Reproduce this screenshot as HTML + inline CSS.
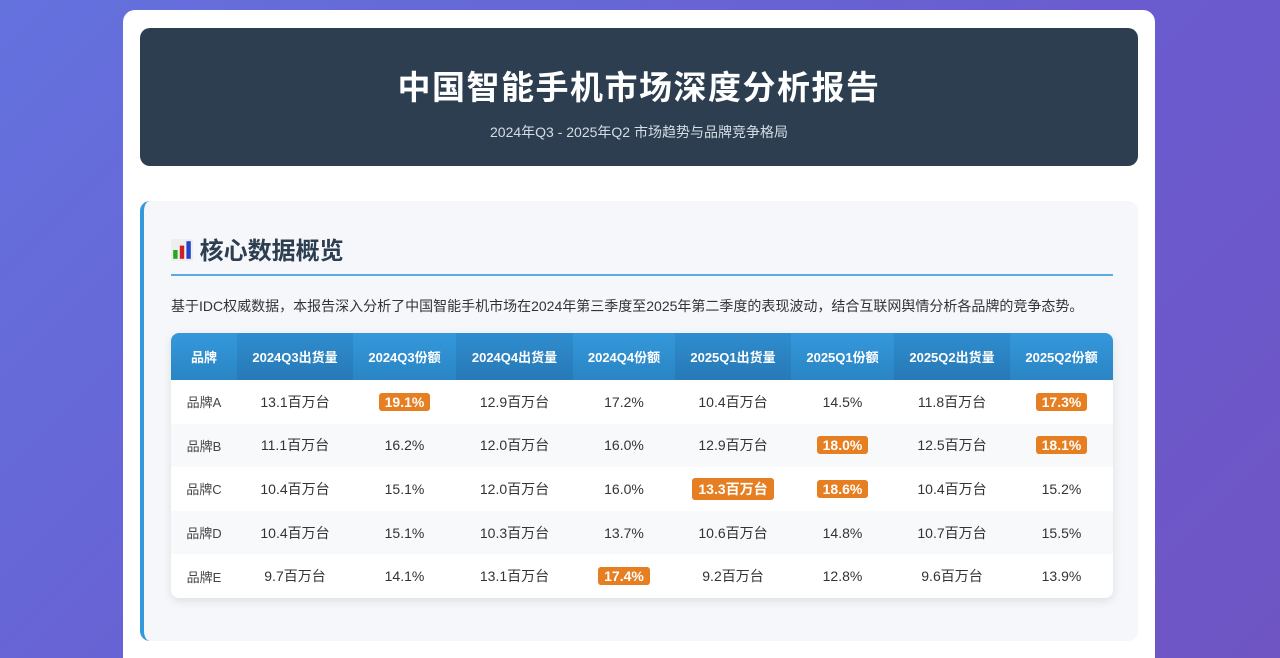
<!DOCTYPE html>
<html><head><meta charset="utf-8"><style>
*{margin:0;padding:0;box-sizing:border-box}
html,body{width:1280px;height:658px;overflow:hidden}
body{background:linear-gradient(135deg,#6472de,#6a5bcf 60%,#6f55c4);font-family:"Liberation Sans","Noto Sans CJK SC",sans-serif;position:relative}
.wrap{position:absolute;left:123px;top:10px;width:1032px;height:660px;background:#fff;border-radius:12px}
.hd{position:absolute;left:17px;top:18px;width:998px;height:138px;background:#2c3e50;border-radius:10px;color:#fff;text-align:center}
.hd h1{font-size:33px;font-weight:bold;margin-top:33px;letter-spacing:1.5px}
.hd p{font-size:14px;color:#d5dde5;margin-top:13px}
.sec{position:absolute;left:17px;top:191px;width:998px;height:440px;background:#f5f7fa;border-left:4px solid #3498db;border-radius:10px}
.sec h2{position:absolute;left:27px;top:30px;font-size:24px;color:#2c3e50;font-weight:bold}
.line{position:absolute;left:27px;top:73px;width:942px;height:2px;background:#3498db;opacity:.8}
.desc{position:absolute;left:27px;top:95px;font-size:14px;color:#333;white-space:nowrap}
table{position:absolute;left:27px;top:132px;width:942px;border-collapse:collapse;border-radius:8px;overflow:hidden;box-shadow:0 3px 10px rgba(0,0,0,.1);font-size:14px}
th{background:linear-gradient(#3498db,#2a85c4);color:#fff;height:47px;font-weight:bold;font-size:13px}
th:nth-child(even){background:linear-gradient(#2f8dcf,#2779b6)}
td{height:43.6px;text-align:center;color:#333}
tr:nth-child(odd) td{background:#f8f9fa}
tr:nth-child(even) td{background:#fff}
td:first-child{color:#444;font-size:13px}
b{display:inline-block;background:#e67e22;color:#fff;padding:1px 6px;border-radius:3px;font-weight:bold}
</style></head><body>
<div class="wrap">
<div class="hd"><h1>中国智能手机市场深度分析报告</h1><p>2024年Q3 - 2025年Q2 市场趋势与品牌竞争格局</p></div>
<div class="sec">
<h2><svg width="22" height="22" viewBox="0 0 20 20" style="vertical-align:-2px"><rect width="20" height="20" fill="#eee"/><rect x="2" y="10" width="4" height="8" fill="#2a2"/><rect x="8" y="6" width="4" height="12" fill="#c22"/><rect x="14" y="2" width="4" height="16" fill="#24c"/></svg> 核心数据概览</h2>
<div class="line"></div>
<div class="desc">基于IDC权威数据，本报告深入分析了中国智能手机市场在2024年第三季度至2025年第二季度的表现波动，结合互联网舆情分析各品牌的竞争态势。</div>
<table>
<colgroup><col style="width:66px"><col style="width:116px"><col style="width:103px"><col style="width:117px"><col style="width:102px"><col style="width:116px"><col style="width:103px"><col style="width:116px"><col style="width:103px"></colgroup>
<tr><th>品牌</th><th>2024Q3出货量</th><th>2024Q3份额</th><th>2024Q4出货量</th><th>2024Q4份额</th><th>2025Q1出货量</th><th>2025Q1份额</th><th>2025Q2出货量</th><th>2025Q2份额</th></tr>
<tr><td>品牌A</td><td>13.1百万台</td><td><b>19.1%</b></td><td>12.9百万台</td><td>17.2%</td><td>10.4百万台</td><td>14.5%</td><td>11.8百万台</td><td><b>17.3%</b></td></tr>
<tr><td>品牌B</td><td>11.1百万台</td><td>16.2%</td><td>12.0百万台</td><td>16.0%</td><td>12.9百万台</td><td><b>18.0%</b></td><td>12.5百万台</td><td><b>18.1%</b></td></tr>
<tr><td>品牌C</td><td>10.4百万台</td><td>15.1%</td><td>12.0百万台</td><td>16.0%</td><td><b>13.3百万台</b></td><td><b>18.6%</b></td><td>10.4百万台</td><td>15.2%</td></tr>
<tr><td>品牌D</td><td>10.4百万台</td><td>15.1%</td><td>10.3百万台</td><td>13.7%</td><td>10.6百万台</td><td>14.8%</td><td>10.7百万台</td><td>15.5%</td></tr>
<tr><td>品牌E</td><td>9.7百万台</td><td>14.1%</td><td>13.1百万台</td><td><b>17.4%</b></td><td>9.2百万台</td><td>12.8%</td><td>9.6百万台</td><td>13.9%</td></tr>
</table>
</div>
</div>
</body></html>
